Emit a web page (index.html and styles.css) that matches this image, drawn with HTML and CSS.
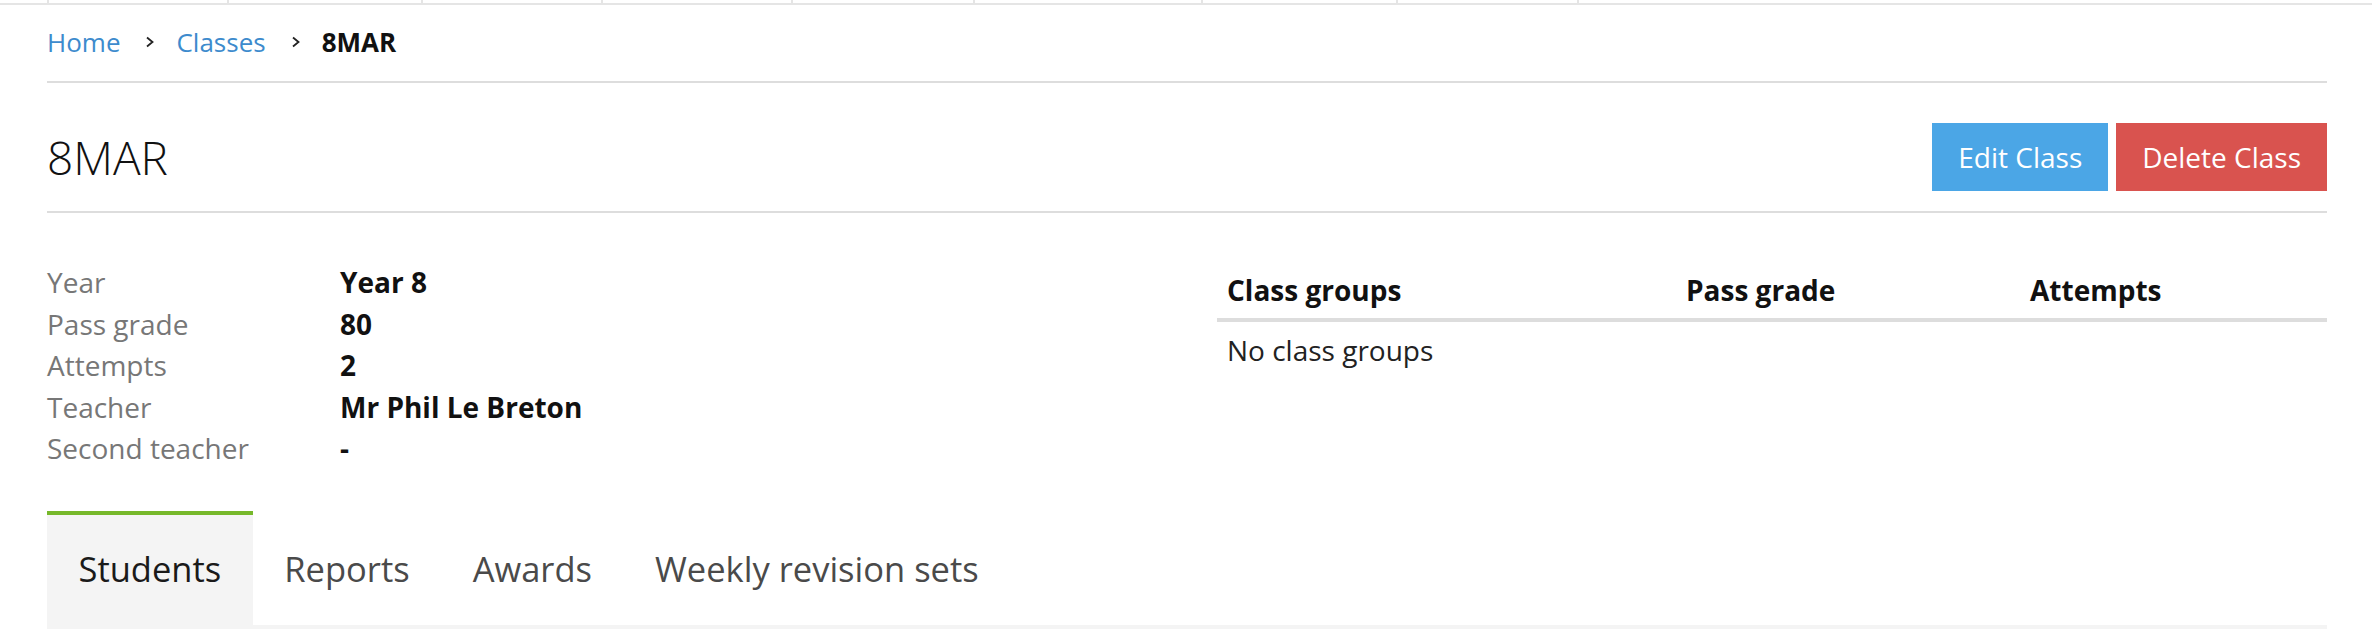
FILE: index.html
```html
<!DOCTYPE html>
<html lang="en">
<head>
<meta charset="utf-8">
<title>8MAR</title>
<link rel="stylesheet" href="styles.css">
</head>
<body>
<div class="topnav">
  <span class="nav-cell w180"></span>
  <span class="nav-cell w194"></span>
  <span class="nav-cell w180"></span>
  <span class="nav-cell w190"></span>
  <span class="nav-cell w182"></span>
  <span class="nav-cell w228"></span>
  <span class="nav-cell w195"></span>
  <span class="nav-cell w181"></span>
  <span class="nav-cell w180"></span>
</div>
<div class="container">
  <nav class="breadcrumb">
    <a href="#" class="crumb-link">Home</a>
    <svg class="crumb-sep" width="10" height="12" viewBox="0 0 10 12"><path d="M2 1.5 L7.5 6 L2 10.5" fill="none" stroke="#222" stroke-width="1.8"/></svg>
    <a href="#" class="crumb-link">Classes</a>
    <svg class="crumb-sep" width="10" height="12" viewBox="0 0 10 12"><path d="M2 1.5 L7.5 6 L2 10.5" fill="none" stroke="#222" stroke-width="1.8"/></svg>
    <span class="crumb-current">8MAR</span>
  </nav>
  <header class="page-header">
    <h1 class="title">8MAR</h1>
    <div class="actions">
      <a href="#" class="btn btn-edit">Edit Class</a>
      <a href="#" class="btn btn-delete">Delete Class</a>
    </div>
  </header>
  <section class="details">
    <dl class="info">
      <dt>Year</dt><dd>Year 8</dd>
      <dt>Pass grade</dt><dd>80</dd>
      <dt>Attempts</dt><dd>2</dd>
      <dt>Teacher</dt><dd>Mr Phil Le Breton</dd>
      <dt>Second teacher</dt><dd>-</dd>
    </dl>
    <table class="groups">
      <thead>
        <tr><th class="c1">Class groups</th><th class="c2">Pass grade</th><th class="c3">Attempts</th></tr>
      </thead>
      <tbody>
        <tr><td colspan="3">No class groups</td></tr>
      </tbody>
    </table>
  </section>
  <ul class="tabs">
    <li class="tab active">Students</li>
    <li class="tab">Reports</li>
    <li class="tab">Awards</li>
    <li class="tab">Weekly revision sets</li>
  </ul>
  <div class="tab-panel"></div>
</div>
</body>
</html>
```
FILE: styles.css
```css
* { box-sizing: border-box; }
html, body { margin: 0; padding: 0; background: #fff; }
body {
  font-family: "Open Sans", "Liberation Sans", sans-serif;
  color: #222;
  overflow: hidden;
}
.topnav {
  display: flex;
  height: 5px;
  padding-left: 47px;
  border-bottom: 2px solid #e5e5e5;
}
.nav-cell { height: 3px; border-left: 2px solid #e5e5e5; display: block; }
.w180 { width: 180px; } .w194 { width: 194px; } .w190 { width: 190px; }
.w182 { width: 182px; } .w228 { width: 228px; } .w195 { width: 195px; }
.w181 { width: 181px; }

.container { width: 2280px; margin-left: 47px; }

.breadcrumb {
  display: flex;
  align-items: center;
  font-size: 26px;
  line-height: 40px;
  padding: 17px 0 19px;
  border-bottom: 2px solid #ddd;
}
.crumb-link { color: #3d8bcd; text-decoration: none; }
.crumb-sep { margin: 0 21px 0 25px; display: block; }
.crumb-current { font-weight: 700; color: #111; }

.page-header {
  display: flex;
  align-items: center;
  justify-content: space-between;
  padding: 40px 0 20px;
  border-bottom: 2px solid #ddd;
}
.title {
  margin: 0;
  font-size: 46px;
  font-weight: 300;
  color: #111;
  line-height: 68px;
}
.actions { display: flex; gap: 8px; }
.btn {
  display: block;
  height: 68px;
  line-height: 68px;
  padding: 0 26px;
  font-size: 28px;
  color: #fff;
  text-decoration: none;
}
.btn-edit { background: #4ba6e6; }
.btn-delete { background: #d9534f; }

.details {
  display: grid;
  grid-template-columns: 1110px 1110px;
  column-gap: 60px;
  align-items: start;
  margin-top: 49px;
}
.info {
  display: grid;
  grid-template-columns: 293px 1fr;
  margin: 0;
  font-size: 28px;
  line-height: 41.5px;
}
.info dt { color: #777; }
.info dd { margin: 0; font-weight: 700; color: #111; }

.groups {
  border-collapse: collapse;
  width: 100%;
  font-size: 28px;
  line-height: 40px;
}
.groups th, .groups td { padding: 8px 10px; text-align: left; }
.groups th { font-weight: 700; color: #111; border-bottom: 4px solid #ddd; }
.groups td { color: #222; }
.c1 { width: 459px; }
.c2 { width: 344px; }

.tabs {
  display: flex;
  list-style: none;
  margin: 41.5px 0 0;
  padding: 0;
}
.tab {
  border-top: 4px solid transparent;
  height: 114px;
  line-height: 108px;
  padding: 0 31.5px;
  font-size: 34.5px;
  color: #4a4a4a;
}
.tab.active {
  border-top-color: #76b82a;
  background: #f4f4f4;
  color: #1a1a1a;
}
.tab-panel { background: #f4f4f4; height: 40px; }
```
